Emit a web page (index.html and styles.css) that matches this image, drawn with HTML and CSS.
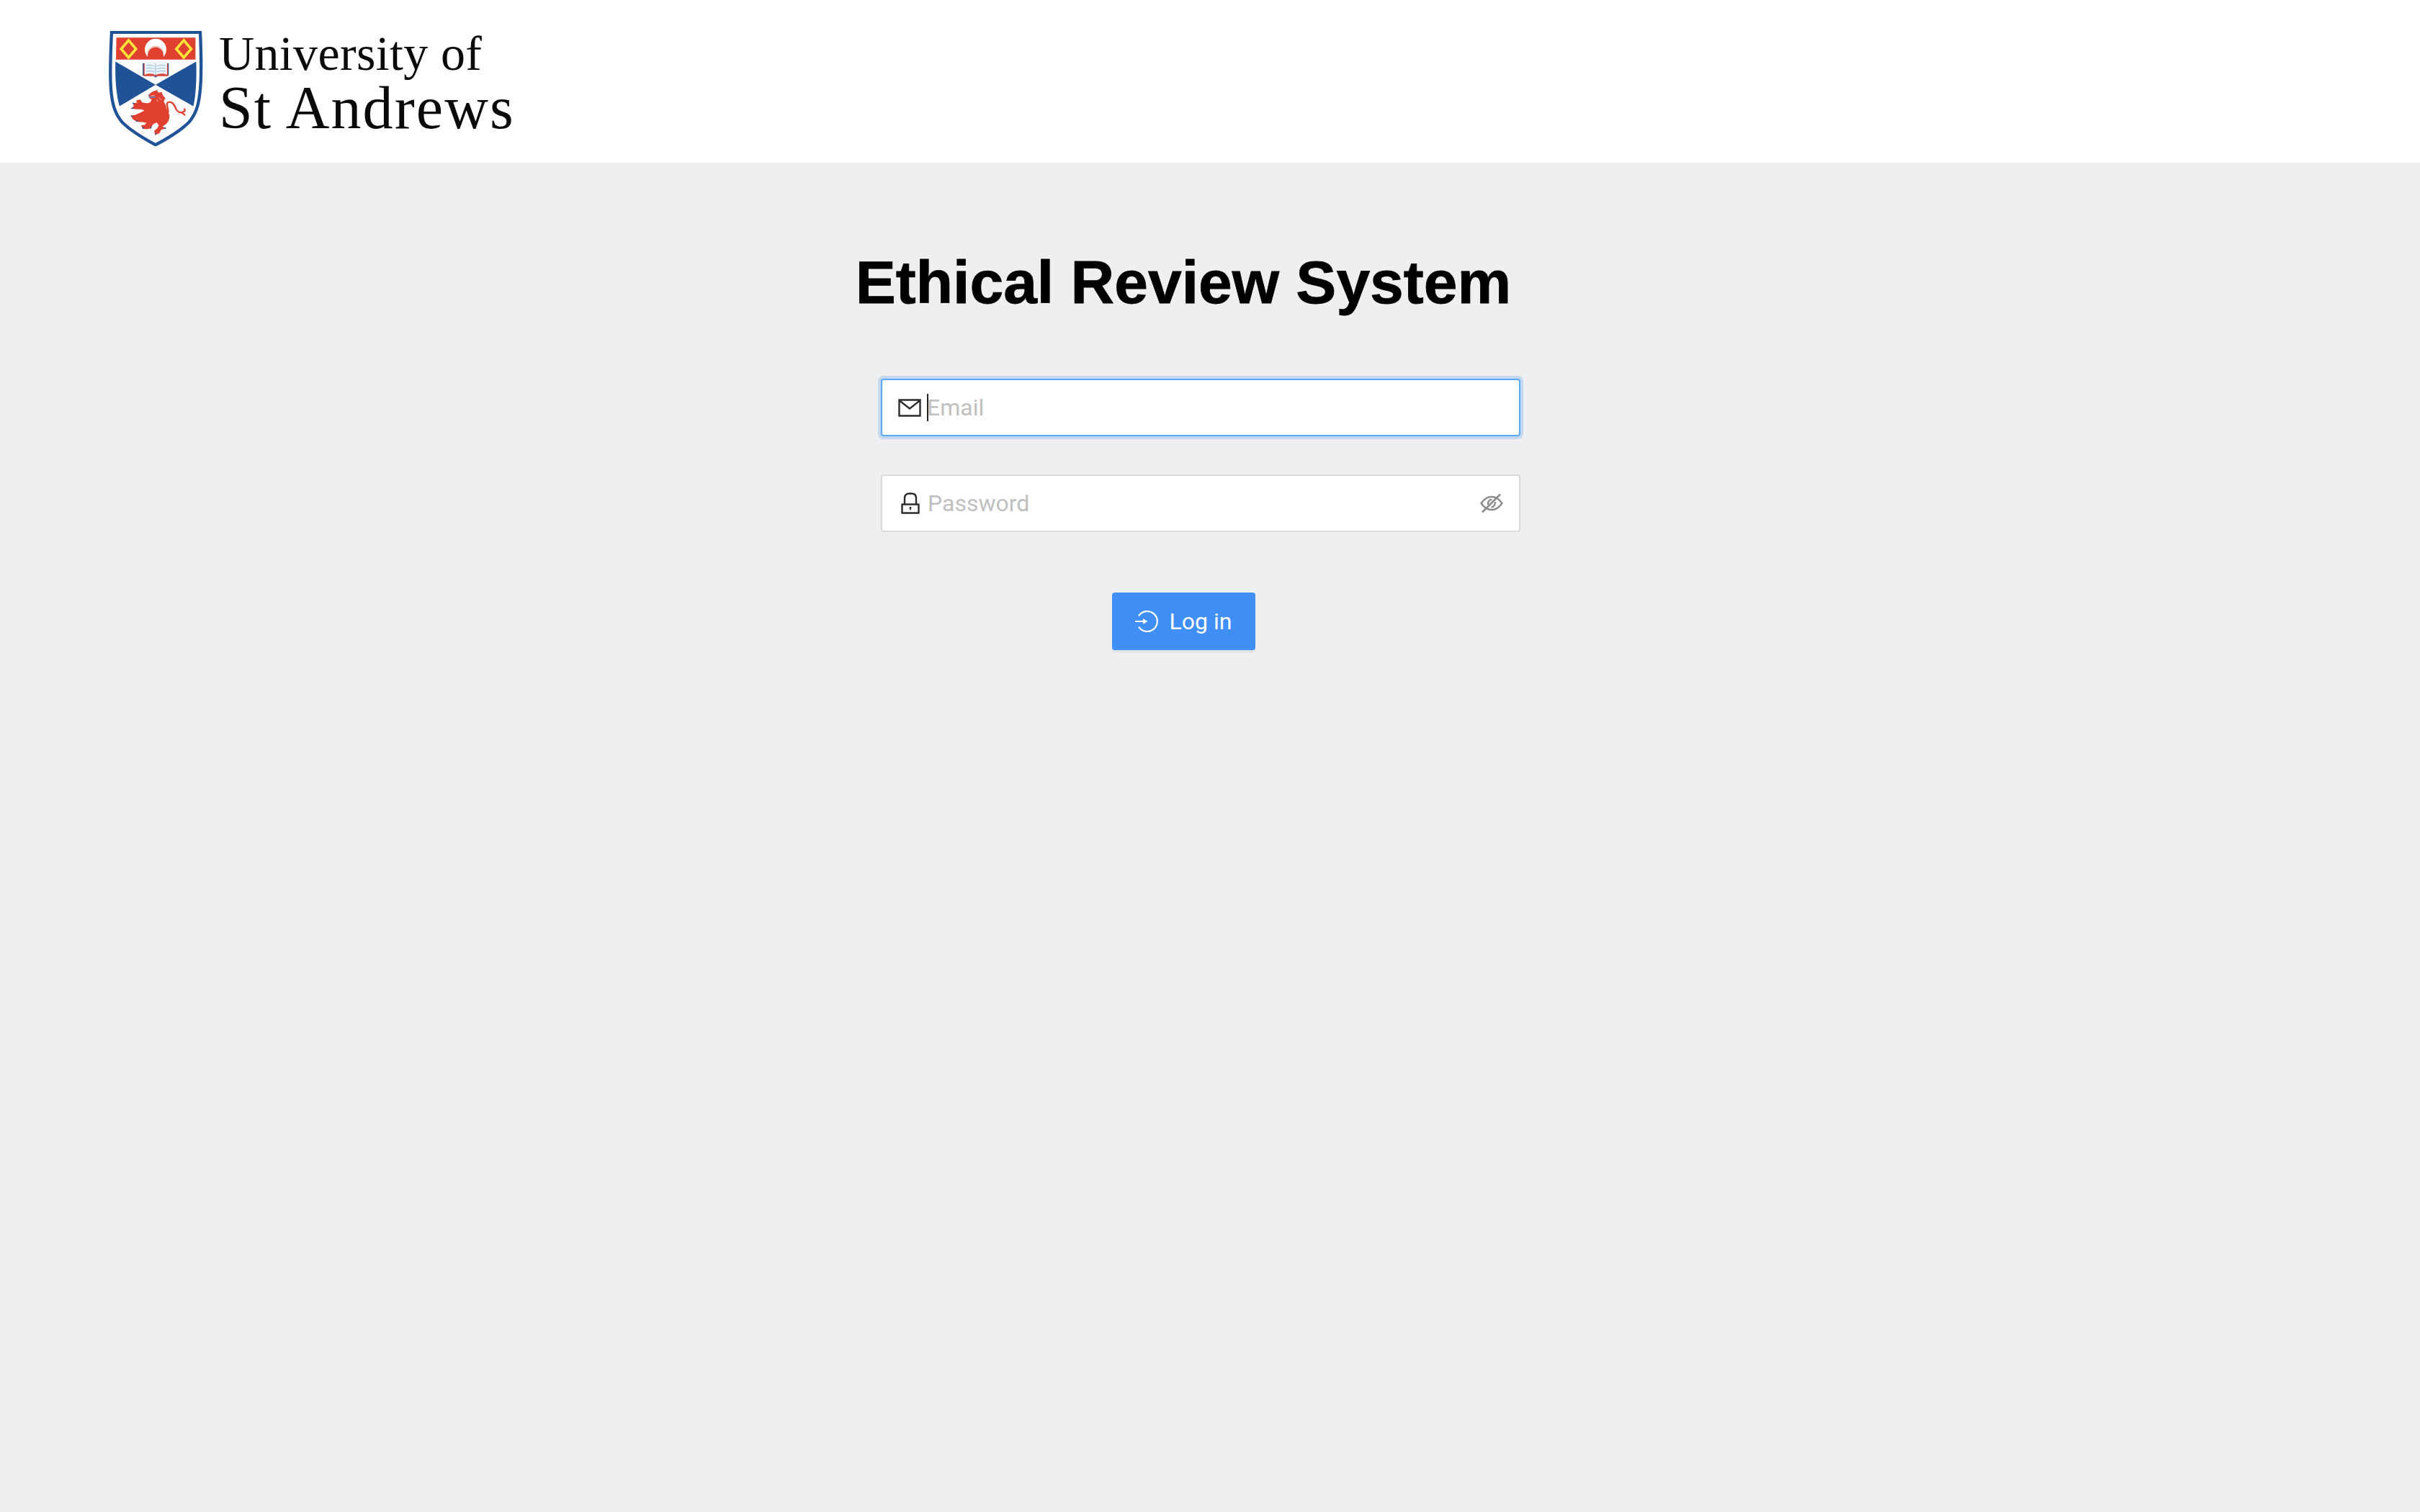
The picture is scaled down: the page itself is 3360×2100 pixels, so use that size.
FILE: index.html
```html
<!DOCTYPE html>
<html lang="en">
<head>
<meta charset="utf-8">
<title>Ethical Review System</title>
<link rel="stylesheet" href="styles.css">
</head>
<body>
<header class="topbar">
  <div class="logo">
    <svg class="crest" viewBox="30 38 395 480" aria-hidden="true">
      <path d="M42 42H413C417 130 420 230 411 300C405 350 395 385 365 420C330 455 280 485 226 514C172 485 122 455 87 420C57 385 47 350 41 300C32 230 38 130 42 42Z" fill="#fff" stroke="#1f5296" stroke-width="13"/>
      <path d="M62 65H393V157H60Z" fill="#e04030"/>
      <path d="M113 76L144 112L113 148L82 112Z M344 76L375 112L344 148L313 112Z" fill="none" stroke="#fbe33a" stroke-width="11"/>
      <path d="M194 146A45 45 0 1 1 258 146A33 33 0 1 0 194 146Z" fill="#fff"/>
      <path d="M190 128A38 38 0 0 1 262 128M199 120A29 31 0 0 1 253 120" fill="none" stroke="#eea79e" stroke-width="2.500"/>
      <path d="M58 165L226 262L75 352C60 300 56 230 58 165Z" fill="#1f5296"/>
      <path d="M396 165L226 262L384 352C396 300 398 230 396 165Z" fill="#1f5296"/>
      <path d="M172 172H281V224H236L226 232L216 224H172Z" fill="#1f5296"/>
      <path d="M176 174H278V226H176Z" fill="#d9473a"/>
      <path d="M180 172C196 164 214 164 226 172C238 164 258 164 274 172V220C258 214 238 214 226 222C214 214 196 214 180 220Z" fill="#eef4fa"/>
      <path d="M226 172V222" stroke="#5d93c6" stroke-width="2"/>
      <path d="M186 182Q206 176 221 184M186 194Q206 188 221 196M186 206Q206 200 221 208M231 184Q250 176 268 182M231 196Q250 188 268 194M231 208Q250 200 268 206" fill="none" stroke="#7fafd6" stroke-width="2.500"/>
      <g transform="translate(60 240)">
        <path d="M135 66L150 52L172 44L178 55L192 52L196 66L207 78L200 92L208 106L215 130L225 150L222 170L212 185L195 197L210 205L190 210L182 225L165 232L160 215L172 205L180 192L170 180L155 188L145 205L125 208L112 205L105 192L120 190L128 182L112 178L100 178L88 176L72 168L62 152L82 148L100 140L120 130L105 125L85 125L65 122L75 110L70 98L88 98L85 88L102 84L110 96L130 100L143 96L150 85L140 78Z" fill="#e04030"/>
        <path d="M212 145C228 140 210 110 215 98C225 90 240 95 248 115C252 128 262 140 275 138C290 135 292 128 285 122M275 138L290 150" fill="none" stroke="#e04030" stroke-width="7"/>
        <path d="M136 66C140 76 155 76 166 72" fill="none" stroke="#5d93c6" stroke-width="4"/>
        <path d="M148 68L162 67M170 84L176 92M182 76L188 86" fill="none" stroke="#fff" stroke-width="2"/>
        <path d="M64 122L74 118M70 98L78 102M62 152L70 154M84 176L92 172M112 206L116 198M145 205L148 197M165 232L167 224M210 205L202 202" fill="none" stroke="#1f5296" stroke-width="4"/>
      </g>
    </svg>
    <div class="wordmark">
      <span class="wordmark-small">University of</span>
      <span class="wordmark-large">St Andrews</span>
    </div>
  </div>
</header>
<main class="content">
  <h1 class="title">Ethical Review System</h1>
  <form class="login-form">
    <label class="field field-focused">
      <svg class="field-icon icon-mail" viewBox="0 0 32 25" aria-hidden="true">
        <path d="M1.500 1.500H30.500V23.500H1.500Z M2 2.500L16 13.500L30 2.500" fill="none" stroke="#2b2b2b" stroke-width="2.400"/>
      </svg>
      <span class="caret"></span>
      <input class="field-input" type="email" placeholder="Email">
    </label>
    <label class="field">
      <svg class="field-icon icon-lock" viewBox="0 0 26 30" aria-hidden="true">
        <path d="M1.500 16.500H24.500V28.500H1.500Z M5 16V8C5 3.800 7.500 1.500 11.500 1.500H14.500C18.500 1.500 21 3.800 21 8V16" fill="none" stroke="#2b2b2b" stroke-width="2.400" stroke-linejoin="round"/>
        <path d="M13 21V24.500" stroke="#2b2b2b" stroke-width="1.600"/>
        <circle cx="13" cy="21.200" r="1.400" fill="#2b2b2b"/>
      </svg>
      <input class="field-input" type="password" placeholder="Password">
      <svg class="icon-eye" viewBox="0 0 32 28" aria-hidden="true">
        <path d="M1.500 14C6 7.500 10.500 5 16 5C21.500 5 26 7.500 30.500 14C26 20.500 21.500 23 16 23C10.500 23 6 20.500 1.500 14Z" fill="none" stroke="#8c8c8c" stroke-width="2.400"/>
        <path d="M21 12C21 16 19 19 15.500 19.500M11 16C10.500 12 12.500 9 16.500 8.700" fill="none" stroke="#8c8c8c" stroke-width="2.400"/>
        <path d="M28 1.500L3 26.500" stroke="#8c8c8c" stroke-width="2.600"/>
      </svg>
    </label>
  </form>
  <button class="login-button" type="button">
    <svg class="icon-login" viewBox="0 0 32 32" aria-hidden="true">
      <path d="M5 8.500A14 14 0 1 1 5 23.500" fill="none" stroke="#fff" stroke-width="2.200"/>
      <path d="M0 16H13" fill="none" stroke="#fff" stroke-width="2"/>
      <path d="M11 12.200L17.500 16L11 19.800Z" fill="#fff"/>
    </svg>
    Log in
  </button>
</main>
</body>
</html>
```
FILE: styles.css
```css
* { box-sizing: border-box; }
html, body { margin: 0; height: 100%; }
body {
  background: #eeeff1;
  font-family: Roboto, "Liberation Sans", sans-serif;
  color: #000;
}
.topbar {
  height: 226px;
  background: #fff;
  display: flex;
  align-items: flex-start;
  padding: 40px 0 0 151px;
}
.logo { display: flex; gap: 22px; }
.crest { width: 131px; height: 160px; display: block; margin-top: 3px; }
.wordmark {
  display: flex;
  flex-direction: column;
  font-family: "Liberation Serif", serif;
  color: #0a0a0a;
}
.wordmark-small { font-size: 68px; line-height: 68px; letter-spacing: 0.35px; }
.wordmark-large { font-size: 84px; line-height: 80px; letter-spacing: 2.1px; margin-top: 2px; }
.content {
  display: flex;
  flex-direction: column;
  align-items: center;
  padding: 116px 74px 0 0;
}
.title {
  margin: 0;
  font-family: "Liberation Sans", Arial, sans-serif;
  font-weight: 700;
  font-size: 84px;
  line-height: 100px;
  color: #000;
  -webkit-text-stroke: 0.8px #000;
}
.login-form {
  display: flex;
  flex-direction: column;
  gap: 53px;
  width: 888px;
  margin: 84px 0 0 48px;
}
.field {
  height: 80px;
  display: flex;
  align-items: center;
  background: #fff;
  border: 2px solid #d9d9d9;
  border-radius: 4px;
  padding: 0 22px;
}
.field-focused {
  border-color: #5ba8fb;
  box-shadow: 0 0 0 4px rgba(24, 120, 230, 0.2);
}
.field-icon { display: block; flex: none; }
.icon-mail { width: 32px; height: 25px; margin-right: 8px; }
.icon-lock { width: 26px; height: 30px; margin: 0 11px 0 4px; }
.caret { flex: none; width: 2px; height: 38px; background: #222; margin-right: -2px; }
.field-input {
  flex: 1;
  min-width: 0;
  border: 0;
  outline: 0;
  padding: 0;
  background: transparent;
  font-family: Roboto, sans-serif;
  font-size: 32px;
  color: #333;
}
.field-input::placeholder { color: #bfbfbf; opacity: 1; }
.icon-eye { width: 32px; height: 28px; flex: none; }
.login-button {
  width: 199px;
  height: 80px;
  margin-top: 84px;
  border: 0;
  border-radius: 4px;
  background: #3f8ff7;
  box-shadow: 0 4px 0 rgba(0, 0, 0, 0.045);
  color: #fff;
  font-family: Roboto, sans-serif;
  font-size: 32px;
  display: flex;
  align-items: center;
  justify-content: center;
  gap: 16px;
  padding: 0;
}
.icon-login { width: 32px; height: 32px; flex: none; }
```
